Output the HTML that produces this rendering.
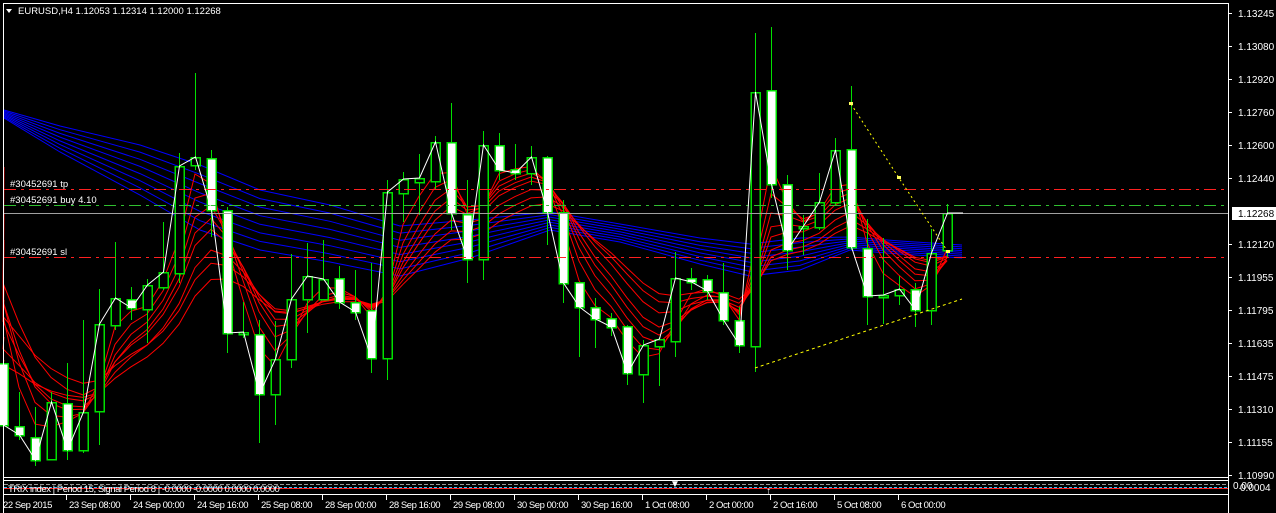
<!DOCTYPE html>
<html><head><meta charset="utf-8"><style>
html,body{margin:0;padding:0;background:#000;width:1276px;height:513px;overflow:hidden}
svg{display:block}
text{font-family:"Liberation Sans",sans-serif;font-size:10px;fill:#fff}
.tl{font-size:9.5px;letter-spacing:-0.45px}
</style></head><body>
<svg id="s" width="1276" height="513" xmlns="http://www.w3.org/2000/svg">
<rect width="1276" height="513" fill="#000"/>
<g id="ma"></g>
<g id="cd" shape-rendering="crispEdges"></g>
<g shape-rendering="crispEdges">
<line x1="4" y1="189.5" x2="1228" y2="189.5" stroke="#ff2020" stroke-dasharray="12,5,3,5"/>
<line x1="4" y1="205.5" x2="1228" y2="205.5" stroke="#30c030" stroke-dasharray="12,5,3,5"/>
<line x1="4" y1="257.5" x2="1228" y2="257.5" stroke="#ff2020" stroke-dasharray="12,5,3,5"/>
<line x1="4" y1="213.5" x2="1228" y2="213.5" stroke="#a0a0a0"/>
</g>
<text x="10" y="187" fill="#ddd" style="font-size:9.5px">#30452691 tp</text>
<text x="10" y="203" style="font-size:9.5px">#30452691 buy 4.10</text>
<text x="10" y="255" style="font-size:9.5px">#30452691 sl</text>
<polyline points="851,104 899,178 948,252" fill="none" stroke="#ffff00" stroke-dasharray="2,3"/>
<polyline points="755,368 962,299" fill="none" stroke="#ffff00" stroke-dasharray="3,3"/>
<rect x="849" y="102" width="4" height="3" fill="#ffff60"/>
<rect x="897" y="176" width="4" height="3" fill="#ffff60"/>
<rect x="946" y="250" width="4" height="3" fill="#ffff60"/>
<g shape-rendering="crispEdges">
<polyline points="3.5,513 3.5,3.5 1228.5,3.5 1228.5,513" fill="none" stroke="#fff"/>
<line x1="3" y1="477.5" x2="1229" y2="477.5" stroke="#fff"/>
<line x1="3" y1="480.5" x2="1229" y2="480.5" stroke="#fff"/>
<line x1="3" y1="494.5" x2="1229" y2="494.5" stroke="#fff"/>
<line x1="4" y1="484.5" x2="1228" y2="484.5" stroke="#999" stroke-dasharray="4,2"/>
<line x1="4" y1="487.5" x2="1228" y2="487.5" stroke="#30c0ff" stroke-dasharray="3,2"/>
<line x1="4" y1="488.5" x2="1228" y2="488.5" stroke="#ff2020"/>
</g>
<text x="8" y="492" class="tl" fill="#ccc">TRIX index | Period 15, Signal Period 8 | -0.0000 -0.0000 0.0000 0.0000</text>
<text x="670" y="487" fill="#30d0ff" font-size="9">▼</text>
<text x="766" y="494" fill="#ffff00" font-size="10">↑</text>
<text x="1233" y="489" font-size="9">0.00</text>
<text x="1240" y="491" font-size="9">0.0004</text>
<polygon points="6,9 12,9 9,13" fill="#fff"/>
<text x="18" y="14" style="font-size:9.5px">EURUSD,H4  1.12053 1.12314 1.12000 1.12268</text>
<g id="ax"></g>
<rect x="1232" y="207" width="44" height="13" fill="#fff"/>
<text x="1238" y="217" style="fill:#000">1.12268</text>
</svg>
<script>
var NS="http://www.w3.org/2000/svg";
function el(t,a,p){var e=document.createElementNS(NS,t);for(var k in a)e.setAttribute(k,a[k]);(p||document.getElementById('s')).appendChild(e);return e;}
var C=[[363,332,440,425],[426,392,440,435],[437,407,466,460],[459,392,460,402],[403,363,460,450],[450,320,453,412],[411,289,445,324],[325,242,330,298],[299,287,320,308],[309,279,343,285],[287,222,290,272],[273,153,283,166],[165,73,170,157],[158,150,237,210],[210,207,353,333],[334,302,338,332],[334,320,443,394],[394,321,425,359],[359,254,368,299],[299,243,333,276],[299,240,300,279],[278,266,309,302],[302,270,320,312],[310,263,373,358],[358,180,380,192],[193,172,222,179],[182,154,215,178],[181,136,190,142],[142,103,230,213],[214,180,283,259],[259,131,280,145],[145,133,180,170],[169,144,180,173],[173,146,185,157],[157,156,245,212],[212,200,303,283],[282,282,357,307],[307,298,348,319],[318,313,336,327],[326,325,385,373],[374,340,403,345],[346,337,386,339],[341,252,357,278],[278,268,290,282],[279,275,300,291],[292,263,325,320],[320,307,353,345],[346,33,372,92],[90,27,198,184],[184,175,270,250],[228,215,255,226],[227,173,230,202],[202,138,205,150],[149,86,250,247],[248,219,325,296],[297,238,324,295],[295,276,305,289],[289,283,327,310],[310,229,325,253],[250,204,258,213]];
var ma=document.getElementById('ma'),cd=document.getElementById('cd');
var B=[[4,110,118],[60,126,152],[140,145,195],[200,165,230],[260,190,250],[330,205,262],[400,226,276],[470,220,258],[550,212,230],[620,224,242],[700,238,264],[750,244,276],[800,238,270],[850,237,250],[900,241,254],[962,245,258]];
for(var j=0;j<8;j++){var f=j/7,pts=[];B.forEach(function(b){pts.push(b[0]+','+(b[1]+(b[2]-b[1])*f).toFixed(1))});el('polyline',{points:pts.join(' '),fill:'none',stroke:'#0000ff','stroke-width':1},ma);}
var per=[2,3,4,5,6,8,10,12],st=[167,213,242,287,240,337,300,360];
for(var j=0;j<8;j++){var a=2/(per[j]+1),v=st[j],pts=['4,'+v];for(var i=0;i<C.length;i++){var m=(C[i][0]+C[i][3]+C[i][1]+C[i][2])/4;v=v+a*(m-v);pts.push((3+16*i)+','+v.toFixed(1));}
el('polyline',{points:pts.join(' '),fill:'none',stroke:'#ff0000','stroke-width':1},ma);}
var cl=[];
for(var i=0;i<C.length;i++){var x=3+16*i,o=C[i][0],h=C[i][1],l=C[i][2],c=C[i][3];
el('line',{x1:x+.5,y1:h,x2:x+.5,y2:l,stroke:'#00e000'},cd);
var t=Math.min(o,c),bt=Math.max(o,c);if(bt-t<2)bt=t+2;
el('rect',{x:x-4,y:t+.5,width:9,height:bt-t,fill:c>o?'#fff':'#000',stroke:'#00e000','stroke-width':1.5},cd);
cl.push((x+.5)+','+c);}
cl.push('963,213');
el('polyline',{points:cl.join(' '),fill:'none',stroke:'#fff','stroke-width':1},document.getElementById('s'));
var ax=document.getElementById('ax');
var P=[['1.13245',13],['1.13080',46],['1.12920',79],['1.12760',112],['1.12600',145],['1.12440',178],['1.12120',244],['1.11955',277],['1.11795',310],['1.11635',343],['1.11475',376],['1.11310',409],['1.11155',442],['1.10990',475]];
P.forEach(function(p){el('line',{x1:1228,y1:p[1]+.5,x2:1232,y2:p[1]+.5,stroke:'#fff'},ax);var t=el('text',{x:1238,y:p[1]+4},ax);t.textContent=p[0];});
var T=[['22 Sep 2015',3],['23 Sep 08:00',66],['24 Sep 00:00',130],['24 Sep 16:00',194],['25 Sep 08:00',258],['28 Sep 00:00',322],['28 Sep 16:00',386],['29 Sep 08:00',450],['30 Sep 00:00',514],['30 Sep 16:00',578],['1 Oct 08:00',642],['2 Oct 00:00',706],['2 Oct 16:00',770],['5 Oct 08:00',834],['6 Oct 00:00',898]];
T.forEach(function(p){el('line',{x1:p[1]+.5,y1:495,x2:p[1]+.5,y2:500,stroke:'#fff'},ax);var t=el('text',{x:p[1]+(p[1]<10?0:3),y:508,'class':'tl'},ax);t.textContent=p[0];});
</script>
</body></html>
